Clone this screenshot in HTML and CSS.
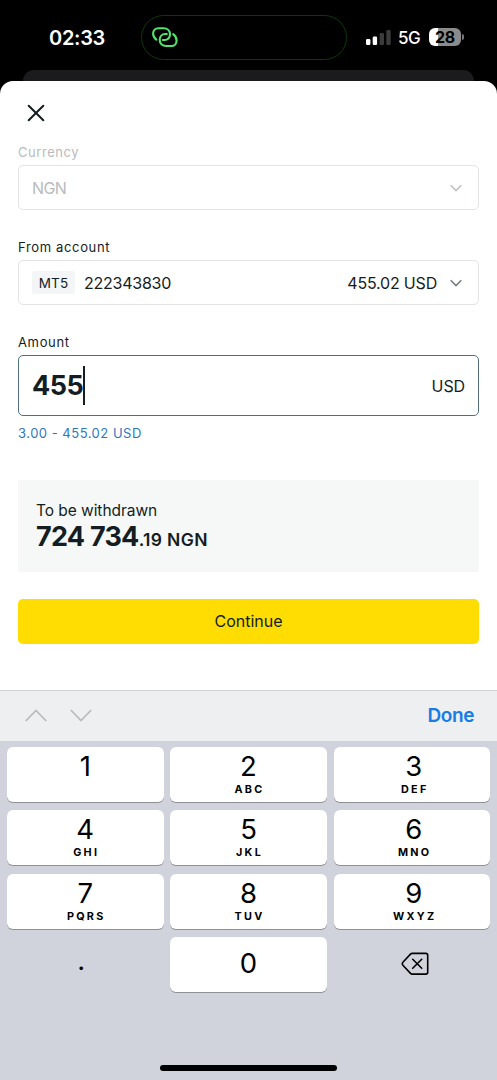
FILE: index.html
```html
<!DOCTYPE html>
<html lang="en">
<head>
<meta charset="utf-8">
<title>Withdrawal</title>
<link rel="stylesheet" href="styles.css">
</head>
<body>
<div class="screen">
  <header class="status">
    <span class="time">02:33</span>
    <div class="island">
      <svg width="26" height="21" viewBox="0 0 26 21" fill="none" stroke="#52e56c" stroke-width="2.1" stroke-linecap="round">
        <path d="M4.3 12.6C2.2 11 1.1 8.8 1.1 6.6 1.1 3.4 3.3 1.2 6.5 1.2H11.6C15.4 1.2 18 3.8 18 7.4 18 10.8 15.6 13 12.6 13H10.9"/>
        <path d="M21.2 7.2C23.4 8.8 24.6 11 24.6 13.4 24.6 16.8 22.4 19 19.2 19H14.1C10.3 19 7.7 16.4 7.7 12.8 7.7 9.4 10.1 7 13.1 7H14.8"/>
      </svg>
    </div>
    <svg class="signal" width="26" height="17" viewBox="0 0 26 17">
      <rect x="0" y="10" width="4.4" height="6" rx="1.2" fill="#fff"/>
      <rect x="6.7" y="7.5" width="4.4" height="8.5" rx="1.2" fill="#fff"/>
      <rect x="13.6" y="4" width="4.4" height="12" rx="1.2" fill="#3b3b3b"/>
      <rect x="20.3" y="1" width="4.4" height="15" rx="1.2" fill="#3b3b3b"/>
    </svg>
    <span class="network">5G</span>
    <div class="battery"><span>28</span></div>
    <i class="battery-cap"></i>
  </header>
  <div class="back-sheet"></div>
  <main class="sheet">
    <svg class="close" width="18" height="18" viewBox="0 0 18 18" fill="none" stroke="#141d22" stroke-width="2" stroke-linecap="round"><path d="M1.7 1.7l14.6 14.6M16.3 1.7L1.7 16.3"/></svg>

    <label class="label muted currency-label">Currency</label>
    <div class="field muted">
      <span class="code">NGN</span>
      <svg class="chevron" width="12" height="8" viewBox="0 0 12 8" fill="none" stroke="#bfc1c3" stroke-width="1.6"><path d="M.7 1.2L6 6.5l5.3-5.3"/></svg>
    </div>

    <label class="label from-label">From account</label>
    <div class="field">
      <span class="tag">MT5</span>
      <span class="account">222343830</span>
      <span class="balance">455.02 USD</span>
      <svg class="chevron" width="12" height="8" viewBox="0 0 12 8" fill="none" stroke="#777b7f" stroke-width="1.6"><path d="M.7 1.2L6 6.5l5.3-5.3"/></svg>
    </div>

    <label class="label from-label">Amount</label>
    <div class="field amount">
      <span class="value">455</span><i class="caret"></i>
      <span class="unit">USD</span>
    </div>
    <p class="hint">3.00 - 455.02 USD</p>

    <section class="summary">
      <p class="summary-title">To be withdrawn</p>
      <p class="total">724 734<small>.19 NGN</small></p>
    </section>

    <button class="continue">Continue</button>
  </main>

  <div class="toolbar">
    <svg width="22" height="13" viewBox="0 0 22 13" fill="none" stroke="#b9babd" stroke-width="1.7"><path d="M.8 12L11 1.5 21.2 12"/></svg>
    <svg width="22" height="13" viewBox="0 0 22 13" fill="none" stroke="#b9babd" stroke-width="1.7"><path d="M.8 1L11 11.5 21.2 1"/></svg>
    <span class="done">Done</span>
  </div>
  <div class="keyboard">
    <div class="keys">
      <div class="key"><b>1</b></div>
      <div class="key"><b>2</b><em>ABC</em></div>
      <div class="key right"><b>3</b><em>DEF</em></div>
      <div class="key"><b>4</b><em>GHI</em></div>
      <div class="key"><b>5</b><em>JKL</em></div>
      <div class="key right"><b>6</b><em>MNO</em></div>
      <div class="key"><b>7</b><em>PQRS</em></div>
      <div class="key"><b>8</b><em>TUV</em></div>
      <div class="key right"><b>9</b><em>WXYZ</em></div>
      <div class="key plain dot"><b>.</b></div>
      <div class="key zero"><b>0</b></div>
      <div class="key plain">
        <svg width="28" height="24" viewBox="0 0 28 24" fill="none" stroke="#000" stroke-width="1.6" stroke-linecap="round" stroke-linejoin="round">
          <path d="M11.2 1.4h13.6a1.9 1.9 0 0 1 1.9 1.9v16.9a1.9 1.9 0 0 1-1.9 1.9H11.2a2.4 2.4 0 0 1-1.7-.7L1.9 13.2a2 2 0 0 1 0-2.9L9.5 2.1a2.4 2.4 0 0 1 1.7-.7z"/>
          <path d="M11.7 7.3l9 9M20.7 7.3l-9 9"/>
        </svg>
      </div>
    </div>
    <div class="home"></div>
  </div>
</div>
</body>
</html>
```
FILE: styles.css
```css
* { box-sizing: border-box; }
body { margin: 0; background: #000; font-family: Inter, "Liberation Sans", sans-serif; color: #141d22; }
p { margin: 0; }
svg { display: block; flex: none; }
.screen { width: 497px; height: 1080px; overflow: hidden; display: flex; flex-direction: column; background: #000; }

.status { height: 70px; flex: none; display: flex; align-items: center; padding: 4px 0 0 49px; color: #fff; }
.time { width: 92px; padding-top: 1px; font-size: 20px; font-weight: 600; letter-spacing: -0.3px; }
.island { width: 206px; height: 45px; border: 1.5px solid #0a3a0a; border-radius: 23px; display: flex; align-items: center; padding-left: 10px; }
.signal { margin-left: 19px; }
.network { margin-left: 6px; width: 31px; padding-top: 1px; font-size: 17px; font-weight: 500; letter-spacing: -0.5px; }
.battery { width: 32px; height: 18px; border-radius: 6px; background: linear-gradient(90deg, #fff 28%, #8b8b8b 28%); color: #000; display: flex; align-items: center; justify-content: center; font-size: 16px; font-weight: 700; letter-spacing: -0.3px; }
.battery-cap { width: 2px; height: 6px; margin-left: 1px; background: #777; border-radius: 0 2px 2px 0; }

.back-sheet { flex: none; height: 11px; margin: 0 23px; border-radius: 11px 11px 0 0; background: #1b1b1d; }
.sheet { flex: none; height: 609px; background: #fff; border-radius: 13px 13px 0 0; padding: 23px 18px 0; display: flex; flex-direction: column; }
.close { margin-left: 9px; }
.label { margin-top: 28px; height: 18px; margin-bottom: 4px; line-height: 18px; font-size: 13px; letter-spacing: 0.55px; }
.currency-label { margin-top: 21px; }
.from-label { letter-spacing: 0.65px; }
.muted { color: #b9bbbd; }
.field { width: 461px; height: 45px; border: 1px solid #e3e4e5; border-radius: 5px; display: flex; align-items: center; padding: 0 16px 0 13px; font-size: 16px; }
.code { letter-spacing: -0.6px; }
.chevron { margin-left: auto; }
.tag { width: 43px; height: 23px; border-radius: 2px; background: #f4f5f6; font-size: 13.5px; letter-spacing: 0.2px; display: flex; align-items: center; justify-content: center; }
.account { margin-left: 9px; letter-spacing: -0.25px; }
.balance { margin-left: auto; letter-spacing: -0.2px; }
.balance + .chevron { margin-left: 13px; }
.amount { height: 61px; border-color: #526e7d; padding-right: 13px; }
.value { font-size: 27px; font-weight: 700; letter-spacing: -0.5px; }
.caret { width: 2px; height: 39px; background: #141d22; }
.unit { margin-left: auto; letter-spacing: -0.1px; }
.hint { margin-top: 8px; height: 18px; line-height: 18px; font-size: 13px; letter-spacing: 0.5px; color: #2f77bd; }
.summary { margin-top: 38px; height: 92px; padding: 20px 18px 0; background: #f6f8f8; }
.summary-title { height: 21px; line-height: 21px; font-size: 15.5px; letter-spacing: -0.05px; }
.total { height: 32px; line-height: 32px; font-size: 27px; font-weight: 700; letter-spacing: -0.75px; white-space: nowrap; }
.total small { font-size: 17.5px; font-weight: 600; letter-spacing: 0.35px; }
.continue { margin-top: 27px; height: 45px; border: 0; border-radius: 5px; background: #ffdd03; color: #141d22; font: 16px Inter, "Liberation Sans", sans-serif; padding: 0 0 1px; }

.toolbar { flex: none; height: 51px; background: #eeeff1; border-top: 1px solid #d0d1d3; display: flex; align-items: center; gap: 23px; padding: 0 23px 2px 25px; }
.done { margin-left: auto; color: #177be8; font-size: 19px; font-weight: 600; letter-spacing: -0.4px; }
.keyboard { flex: 1; background: #d0d3db; padding: 6px 7px 0; }
.keys { display: grid; grid-template-columns: repeat(3, 156.5px); grid-auto-rows: 55px; gap: 8.4px 6.75px; }
.key { border-radius: 6px; background: #fff; box-shadow: 0 1px 0 #8e9095; color: #000; display: flex; flex-direction: column; align-items: center; padding-top: 3px; }
.key b { font-size: 27.5px; line-height: 32px; font-weight: 400; }
.key em { margin-top: 2px; font-size: 10.8px; line-height: 12px; font-style: normal; font-weight: 700; letter-spacing: 2.3px; margin-right: -2px; }
.right { padding-left: 4px; }
.plain { background: none; box-shadow: none; justify-content: center; padding: 0 0 0 6px; }
.plain svg { margin-top: -2px; }
.dot { padding: 0 8px 9px 0; }
.zero { padding-top: 10px; }
.home { width: 177px; height: 6px; border-radius: 3px; background: #000; margin: 73px auto 0; }
```
